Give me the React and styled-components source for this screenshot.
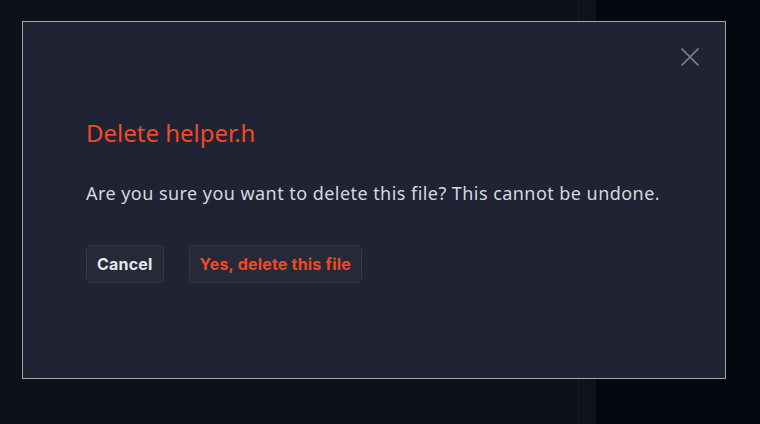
import React from "react";
import styled, { createGlobalStyle } from "styled-components";

const GlobalStyle = createGlobalStyle`
    html, body {
        margin: 0;
        padding: 0;
        width: 760px;
        height: 424px;
        overflow: hidden;
        background: #0e1119;
    }
    #root {
        height: 100%;
    }
`;

const Page = styled.div`
    position: relative;
    display: flex;
    width: 760px;
    height: 424px;
`;

const Main = styled.div`
    width: 578px;
    background: #0e1119;
`;

const Gutter = styled.div`
    width: 17px;
    border-left: 1px solid #191c24;
    background: #0f1218;
`;

const Side = styled.div`
    flex: 1;
    background: #05080f;
`;

const Modal = styled.div`
    position: absolute;
    left: 22px;
    top: 21px;
    width: 704px;
    height: 358px;
    box-sizing: border-box;
    border: 1px solid #a3a5a9;
    background: #1f2333;
    padding: 95px 40px 0 63px;
    display: flex;
    flex-direction: column;
`;

const Close = styled.button`
    position: absolute;
    top: 23px;
    right: 23px;
    width: 24px;
    height: 24px;
    padding: 0;
    border: none;
    background: transparent;
    display: flex;
    align-items: center;
    justify-content: center;
    cursor: pointer;
`;

const Title = styled.h2`
    margin: 0;
    font-family: "Noto Sans", sans-serif;
    font-weight: 400;
    font-size: 24px;
    line-height: 32px;
    color: #f04a24;
`;

const Message = styled.p`
    margin: 32px 0 0;
    font-family: "Noto Sans", sans-serif;
    font-size: 18px;
    line-height: 24px;
    letter-spacing: 0.45px;
    white-space: nowrap;
    color: #d6d8de;
`;

const Actions = styled.div`
    display: flex;
    gap: 25px;
    margin-top: 40px;
`;

const Button = styled.button`
    height: 38px;
    padding: 0 10px;
    border: 1px solid #343847;
    border-radius: 5px;
    background: #252938;
    font-family: Inter, sans-serif;
    font-weight: 700;
    font-size: 16px;
    letter-spacing: 0.2px;
    color: ${(p) => (p.$danger ? "#f04a24" : "#e4e6ea")};
    cursor: pointer;
`;

const App = () => {
    return (
        <Page>
            <GlobalStyle />
            <Main />
            <Gutter />
            <Side />
            <Modal>
                <Close aria-label="Close">
                    <svg width="18" height="18" viewBox="0 0 18 18">
                        <path d="M0.5 0.5 L17.5 17.5 M17.5 0.5 L0.5 17.5" stroke="#797c87" strokeWidth="1.7" fill="none" />
                    </svg>
                </Close>
                <Title>Delete helper.h</Title>
                <Message>Are you sure you want to delete this file? This cannot be undone.</Message>
                <Actions>
                    <Button>Cancel</Button>
                    <Button $danger>Yes, delete this file</Button>
                </Actions>
            </Modal>
        </Page>
    );
};

export default App;
